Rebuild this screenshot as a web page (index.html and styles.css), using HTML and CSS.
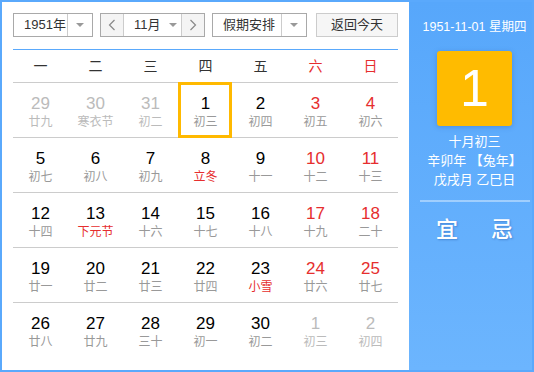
FILE: index.html
```html
<!DOCTYPE html>
<html lang="zh">
<head>
<meta charset="utf-8">
<link rel="stylesheet" href="styles.css">
</head>
<body>
<div class="cal">
  <div class="main">
    <div class="toolbar">
      <div class="sel sel-year"><span class="sel-text">1951年</span><span class="sel-arrow"><i class="tri"></i></span></div>
      <div class="month">
        <span class="nav"><svg width="8" height="12" viewBox="0 0 8 12"><polyline points="6.5,1 1.5,6 6.5,11" fill="none" stroke="#888" stroke-width="1.2"/></svg></span>
        <span class="month-mid"><span class="month-text">11月</span><i class="tri"></i></span>
        <span class="nav"><svg width="8" height="12" viewBox="0 0 8 12"><polyline points="1.5,1 6.5,6 1.5,11" fill="none" stroke="#888" stroke-width="1.2"/></svg></span>
      </div>
      <div class="sel sel-hol"><span class="sel-text">假期安排</span><span class="sel-arrow"><i class="tri"></i></span></div>
      <div class="btn-today">返回今天</div>
    </div>
    <div class="week">
      <span>一</span><span>二</span><span>三</span><span>四</span><span>五</span><span class="red">六</span><span class="red">日</span>
    </div>
    <div class="grid">
      <div class="row">
        <div class="cell other"><b>29</b><small>廿九</small></div>
        <div class="cell other"><b>30</b><small>寒衣节</small></div>
        <div class="cell other"><b>31</b><small>初二</small></div>
        <div class="cell active"><b>1</b><small>初三</small></div>
        <div class="cell"><b>2</b><small>初四</small></div>
        <div class="cell wk"><b>3</b><small>初五</small></div>
        <div class="cell wk"><b>4</b><small>初六</small></div>
      </div>
      <div class="row">
        <div class="cell"><b>5</b><small>初七</small></div>
        <div class="cell"><b>6</b><small>初八</small></div>
        <div class="cell"><b>7</b><small>初九</small></div>
        <div class="cell fest"><b>8</b><small>立冬</small></div>
        <div class="cell"><b>9</b><small>十一</small></div>
        <div class="cell wk"><b>10</b><small>十二</small></div>
        <div class="cell wk"><b>11</b><small>十三</small></div>
      </div>
      <div class="row">
        <div class="cell"><b>12</b><small>十四</small></div>
        <div class="cell fest"><b>13</b><small>下元节</small></div>
        <div class="cell"><b>14</b><small>十六</small></div>
        <div class="cell"><b>15</b><small>十七</small></div>
        <div class="cell"><b>16</b><small>十八</small></div>
        <div class="cell wk"><b>17</b><small>十九</small></div>
        <div class="cell wk"><b>18</b><small>二十</small></div>
      </div>
      <div class="row">
        <div class="cell"><b>19</b><small>廿一</small></div>
        <div class="cell"><b>20</b><small>廿二</small></div>
        <div class="cell"><b>21</b><small>廿三</small></div>
        <div class="cell"><b>22</b><small>廿四</small></div>
        <div class="cell fest"><b>23</b><small>小雪</small></div>
        <div class="cell wk"><b>24</b><small>廿六</small></div>
        <div class="cell wk"><b>25</b><small>廿七</small></div>
      </div>
      <div class="row last">
        <div class="cell"><b>26</b><small>廿八</small></div>
        <div class="cell"><b>27</b><small>廿九</small></div>
        <div class="cell"><b>28</b><small>三十</small></div>
        <div class="cell"><b>29</b><small>初一</small></div>
        <div class="cell"><b>30</b><small>初二</small></div>
        <div class="cell other"><b>1</b><small>初三</small></div>
        <div class="cell other"><b>2</b><small>初四</small></div>
      </div>
    </div>
  </div>
  <div class="side">
    <div class="side-date">1951-11-01 星期四</div>
    <div class="big-day">1</div>
    <div class="lunar-info">
      <div>十月初三</div>
      <div>辛卯年 【兔年】</div>
      <div>戊戌月 乙巳日</div>
    </div>
    <div class="sep"></div>
    <div class="yiji"><span>宜</span><span>忌</span></div>
  </div>
</div>
</body>
</html>
```
FILE: styles.css
```css
* { box-sizing: border-box; }
html, body { margin: 0; padding: 0; }
body {
  font-family: "Liberation Sans", Arial, "Noto Sans CJK SC", sans-serif;
  background: #fff;
}
.cal {
  width: 534px;
  height: 372px;
  border: 2px solid #5aa9fc;
  display: flex;
  background: #fff;
}
.main {
  width: 407px;
  flex: none;
  padding: 11px 11px 0 11px;
  background: #fff;
}
.toolbar {
  display: flex;
  height: 24px;
  font-size: 13px;
  color: #333;
}
.sel {
  display: flex;
  border: 1px solid #a9a9a9;
  background: #fff;
  height: 24px;
}
.sel-text {
  flex: 1;
  line-height: 22px;
  padding-left: 10px;
}
.sel-arrow {
  width: 25px;
  border-left: 1px solid #ccc;
  display: flex;
  align-items: center;
  justify-content: center;
}
.tri {
  display: inline-block;
  width: 0;
  height: 0;
  border-left: 4px solid transparent;
  border-right: 4px solid transparent;
  border-top: 4px solid #999;
}
.sel-year { width: 80px; }
.month {
  margin-left: 7px;
  width: 105px;
  height: 24px;
  display: flex;
  border: 1px solid #a9a9a9;
}
.nav {
  width: 22px;
  background: #f4f4f4;
  display: flex;
  align-items: center;
  justify-content: center;
}
.month-mid {
  flex: 1;
  border-left: 1px solid #ccc;
  border-right: 1px solid #ccc;
  display: flex;
  align-items: center;
  padding-left: 10px;
  gap: 8px;
}
.month-text { line-height: 22px; }
.sel-hol { margin-left: 7px; width: 95px; }
.sel-hol .sel-text { padding-left: 10px; }
.btn-today {
  margin-left: 9px;
  width: 82px;
  height: 24px;
  border: 1px solid #ccc;
  background: #f6f6f6;
  text-align: center;
  line-height: 22px;
}
.week {
  margin-top: 12px;
  border-top: 1px solid #5aa9fc;
  border-bottom: 1px solid #ccc;
  display: grid;
  grid-template-columns: repeat(7, 55px);
  height: 34px;
  font-size: 14px;
  color: #333;
}
.week span {
  text-align: center;
  line-height: 33px;
}
.red { color: #e62e2e; }
.row {
  display: grid;
  grid-template-columns: repeat(7, 55px);
  height: 55px;
  border-bottom: 1px solid #ccc;
}
.row.last { border-bottom: none; }
.cell {
  position: relative;
  text-align: center;
  padding-top: 10px;
}
.cell b {
  display: block;
  font-weight: normal;
  font-size: 17px;
  line-height: 22px;
  color: #000;
}
.cell small {
  display: block;
  font-size: 12px;
  line-height: 14px;
  color: #999;
}
.cell.wk b { color: #e62e2e; }
.cell.fest small { color: #e62e2e; }
.cell.other b { color: #bbb; }
.cell.other small { color: #bbb; }
.cell.active::after {
  content: "";
  position: absolute;
  top: -1px;
  bottom: -1px;
  left: 0;
  right: 1px;
  border: 3px solid #ffb900;
}
.side {
  flex: 1;
  background: linear-gradient(#57a7fb, #6cb5fe);
  padding-left: 8px;
  color: #fff;
  display: flex;
  flex-direction: column;
  align-items: center;
}
.side-date {
  margin-top: 17px;
  font-size: 12.5px;
  line-height: 16px;
}
.big-day {
  margin-top: 16px;
  width: 75px;
  height: 75px;
  background: #ffbb00;
  border-radius: 3px;
  box-shadow: 0 1px 5px rgba(40, 90, 170, 0.35);
  font-size: 52px;
  line-height: 75px;
  text-align: center;
  color: #fff;
}
.lunar-info {
  margin-top: 6px;
  font-size: 13px;
  line-height: 19px;
  text-align: center;
}
.sep {
  margin-top: 11px;
  width: 110px;
  height: 2px;
  background: rgba(255, 255, 255, 0.4);
}
.yiji {
  margin-top: 15px;
  display: flex;
  gap: 33px;
  font-size: 22px;
  line-height: 26px;
  font-weight: 500;
  text-shadow: 1px 1px 2px rgba(0, 40, 120, 0.3);
}
```
